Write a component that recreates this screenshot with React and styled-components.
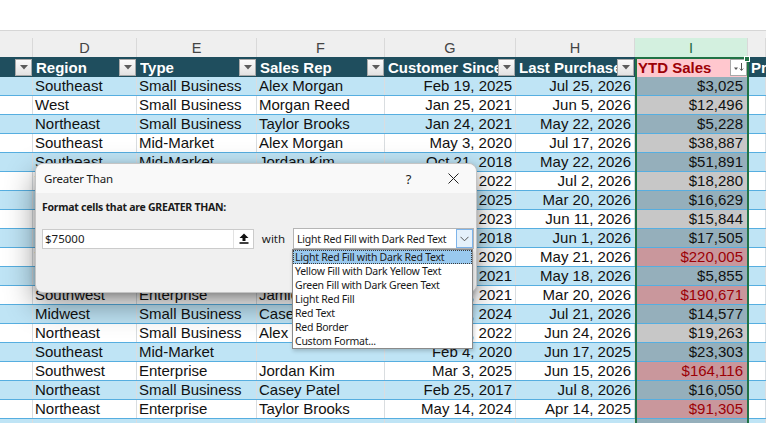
import React from "react";
import styled, { createGlobalStyle } from "styled-components";

const COLS = "33px 104px 120px 128px 131px 119px 113px 1fr";
const GRID_FONT = `"Liberation Sans", Arial, sans-serif`;
const UI_FONT = `"Noto Sans", "Open Sans", sans-serif`;
const LIMIT = 75000;

const letters = ["", "D", "E", "F", "G", "H", "I", ""];
const headers = ["", "Region", "Type", "Sales Rep", "Customer Since", "Last Purchase", "YTD Sales", "Pr"];

const rows = [
  ["Southeast", "Small Business", "Alex Morgan", "Feb 19, 2025", "Jul 25, 2026", "$3,025"],
  ["West", "Small Business", "Morgan Reed", "Jan 25, 2021", "Jun 5, 2026", "$12,496"],
  ["Northeast", "Small Business", "Taylor Brooks", "Jan 24, 2021", "May 22, 2026", "$5,228"],
  ["Southeast", "Mid-Market", "Alex Morgan", "May 3, 2020", "Jul 17, 2026", "$38,887"],
  ["Southeast", "Mid-Market", "Jordan Kim", "Oct 21, 2018", "May 22, 2026", "$51,891"],
  ["West", "Enterprise", "Casey Patel", "Mar 14, 2022", "Jul 2, 2026", "$18,280"],
  ["Midwest", "Small Business", "Morgan Reed", "Sep 9, 2025", "Mar 20, 2026", "$16,629"],
  ["Northeast", "Mid-Market", "Alex Morgan", "Jun 30, 2023", "Jun 11, 2026", "$15,844"],
  ["Southwest", "Small Business", "Taylor Brooks", "Dec 2, 2018", "Jun 1, 2026", "$17,505"],
  ["West", "Enterprise", "Jordan Kim", "Apr 7, 2020", "May 21, 2026", "$220,005"],
  ["Southeast", "Small Business", "Casey Patel", "Nov 18, 2021", "May 18, 2026", "$5,855"],
  ["Southwest", "Enterprise", "Jamie Lee", "Aug 5, 2021", "Mar 20, 2026", "$190,671"],
  ["Midwest", "Small Business", "Casey Patel", "Jan 13, 2024", "Jul 21, 2026", "$14,577"],
  ["Northeast", "Small Business", "Alex Morgan", "Oct 17, 2022", "Jun 24, 2026", "$19,263"],
  ["Southeast", "Mid-Market", "", "Feb 4, 2020", "Jun 17, 2025", "$23,303"],
  ["Southwest", "Enterprise", "Jordan Kim", "Mar 3, 2025", "Jun 15, 2026", "$164,116"],
  ["Northeast", "Small Business", "Casey Patel", "Feb 25, 2017", "Jul 8, 2026", "$16,050"],
  ["Northeast", "Enterprise", "Taylor Brooks", "May 14, 2024", "Apr 14, 2025", "$91,305"],
  ["", "", "", "", "", ""],
];

const formats = [
  "Light Red Fill with Dark Red Text",
  "Yellow Fill with Dark Yellow Text",
  "Green Fill with Dark Green Text",
  "Light Red Fill",
  "Red Text",
  "Red Border",
  "Custom Format...",
];

const toNumber = (s) => Number(s.replace(/[$,]/g, "")) || 0;

function FilterButton({ sorted }) {
  return (
    <FilterBox $sorted={sorted}>
      {sorted ? (
        <svg width="12" height="10" viewBox="0 0 12 10">
          <path d="M1 5.5h4L3 8z" fill="#555" />
          <path d="M8.5 1v7.5M6.8 6.6l1.7 1.7 1.7-1.7" stroke="#555" strokeWidth="1" fill="none" />
        </svg>
      ) : (
        <svg width="8" height="5" viewBox="0 0 8 5">
          <path d="M0 0h8L4 4.5z" fill="#5c5c5c" />
        </svg>
      )}
    </FilterBox>
  );
}

function App() {
  return (
    <Page>
      <GlobalStyle />
      <Ribbon />
      <ColumnStrip>
        <LetterRow>
          {letters.map((l, i) => (
            <Letter key={i} $active={l === "I"}>{l}</Letter>
          ))}
        </LetterRow>
      </ColumnStrip>
      <Table>
        <HeadRow>
          {headers.map((h, i) => (
            <HeadCell key={i} $flag={h === "YTD Sales"}>
              <span>{h}</span>
              {h !== "Pr" && <FilterButton sorted={h === "YTD Sales"} />}
            </HeadCell>
          ))}
        </HeadRow>
        {rows.map((r, i) => {
          const band = i % 2 === 0;
          const hot = toNumber(r[5]) > LIMIT;
          return (
            <Row key={i} $band={band}>
              <Cell />
              <Cell>{r[0]}</Cell>
              <Cell>{r[1]}</Cell>
              <Cell>{r[2]}</Cell>
              <Cell $right>{r[3]}</Cell>
              <Cell $right>{r[4]}</Cell>
              <SalesCell $band={band} $hot={hot}>{r[5]}</SalesCell>
              <Cell />
            </Row>
          );
        })}
        <Selection>
          <Handle />
        </Selection>
      </Table>

      <Dialog>
        <TitleBar>
          <Title>Greater Than</Title>
          <CaptionButton>?</CaptionButton>
          <CaptionButton>
            <svg width="11" height="11" viewBox="0 0 11 11">
              <path d="M0.5 0.5l10 10M10.5 0.5l-10 10" stroke="#222" strokeWidth="1" />
            </svg>
          </CaptionButton>
        </TitleBar>
        <Body>
          <Prompt>Format cells that are GREATER THAN:</Prompt>
          <FieldRow>
            <ValueBox>
              <span>$75000</span>
              <CollapseButton>
                <svg width="10" height="11" viewBox="0 0 10 11">
                  <path d="M5 0.5L9.5 5H6.5v3h-3V5H0.5z" fill="#111" />
                  <rect x="0.5" y="9.2" width="9" height="1.6" fill="#111" />
                </svg>
              </CollapseButton>
            </ValueBox>
            <WithLabel>with</WithLabel>
            <SelectWrap>
              <SelectBox>
                <span>{formats[0]}</span>
                <SelectArrow>
                  <svg width="9" height="6" viewBox="0 0 9 6">
                    <path d="M0.5 0.8l4 4 4-4" stroke="#555" strokeWidth="1" fill="none" />
                  </svg>
                </SelectArrow>
              </SelectBox>
              <OptionList>
                {formats.map((f, i) => (
                  <Option key={f} $current={i === 0}>{f}</Option>
                ))}
              </OptionList>
            </SelectWrap>
          </FieldRow>
        </Body>
      </Dialog>
    </Page>
  );
}

export default App;

const GlobalStyle = createGlobalStyle`
  html, body {
    margin: 0;
    padding: 0;
    background: #ffffff;
    overflow: hidden;
  }
`;

const Page = styled.div`
  position: relative;
  width: 766px;
  height: 423px;
  overflow: hidden;
  background: #ffffff;
  font-family: ${GRID_FONT};
`;

const Ribbon = styled.div`
  height: 30px;
  border-bottom: 1px solid #d6d6d6;
`;

const ColumnStrip = styled.div`
  padding-top: 7px;
  background: #efefef;
`;

const LetterRow = styled.div`
  display: grid;
  grid-template-columns: ${COLS};
  height: 19px;
`;

const Letter = styled.div`
  display: flex;
  align-items: center;
  justify-content: center;
  border-right: 1px solid #d9d9d9;
  font-size: 14.5px;
  color: ${(p) => (p.$active ? "#1c6b3f" : "#444444")};
  background: ${(p) => (p.$active ? "#d3f0df" : "transparent")};
`;

const Table = styled.div`
  position: relative;
`;

const HeadRow = styled.div`
  display: grid;
  grid-template-columns: ${COLS};
  height: 20px;
  background: #1f4e5e;
`;

const HeadCell = styled.div`
  display: flex;
  align-items: center;
  min-width: 0;
  padding-left: 3px;
  background: ${(p) => (p.$flag ? "#ffc7ce" : "transparent")};
  color: ${(p) => (p.$flag ? "#9c0006" : "#ffffff")};
  font-size: 15px;
  font-weight: 700;
  white-space: nowrap;

  span {
    flex: 1;
    overflow: hidden;
  }
`;

const FilterBox = styled.div`
  flex: none;
  width: 15px;
  height: 15px;
  margin-right: 1px;
  display: flex;
  align-items: center;
  justify-content: center;
  border: 1px solid #a9a9a9;
  background: ${(p) => (p.$sorted ? "#ffffff" : "linear-gradient(#fbfbfb, #e2e2e2)")};
`;

const Row = styled.div`
  display: grid;
  grid-template-columns: ${COLS};
  height: 19px;
  box-sizing: border-box;
  border-bottom: 1px solid #56aee0;
  background: ${(p) => (p.$band ? "#bfe4f5" : "#ffffff")};
`;

const Cell = styled.div`
  min-width: 0;
  padding: 0 ${(p) => (p.$right ? "3px" : "2px")} 0 ${(p) => (p.$right ? "0" : "2px")};
  border-right: 1px solid #d9dde0;
  font-size: 15px;
  line-height: 18px;
  color: #111111;
  text-align: ${(p) => (p.$right ? "right" : "left")};
  white-space: nowrap;
  overflow: hidden;
`;

const SalesCell = styled(Cell)`
  text-align: right;
  padding: 0 4px 0 0;
  background: ${(p) => (p.$hot ? "#c9979c" : p.$band ? "#95afbb" : "#c7c7c7")};
  color: ${(p) => (p.$hot ? "#9c0006" : "#111111")};
`;

const Selection = styled.div`
  position: absolute;
  top: 0;
  bottom: 0;
  left: 635px;
  width: 114px;
  box-sizing: border-box;
  border: 2px solid #217346;
  pointer-events: none;
`;

const Handle = styled.div`
  position: absolute;
  top: -3px;
  right: -3px;
  width: 4px;
  height: 4px;
  background: #217346;
  border: 1px solid #ffffff;
`;

const Dialog = styled.div`
  position: absolute;
  left: 35px;
  top: 163px;
  width: 442px;
  height: 130px;
  box-sizing: border-box;
  border: 1px solid #c4c4c4;
  border-radius: 8px;
  background: #f0f0f0;
  box-shadow: 0 12px 30px rgba(0, 0, 0, 0.42), 0 2px 6px rgba(0, 0, 0, 0.2);
  font-family: ${UI_FONT};
  color: #1a1a1a;
`;

const TitleBar = styled.div`
  display: flex;
  align-items: center;
  height: 29px;
  padding-left: 8px;
  border-radius: 8px 8px 0 0;
  background: #f9f9f9;
`;

const Title = styled.div`
  flex: 1;
  font-size: 11.5px;
  letter-spacing: -0.2px;
`;

const CaptionButton = styled.div`
  width: 45px;
  height: 29px;
  display: flex;
  align-items: center;
  justify-content: center;
  font-size: 13px;
  color: #222222;
`;

const Body = styled.div`
  padding: 6px 6px 0 6px;
`;

const Prompt = styled.div`
  height: 16px;
  line-height: 16px;
  font-size: 10.5px;
  font-weight: 700;
  letter-spacing: -0.25px;
`;

const FieldRow = styled.div`
  display: flex;
  align-items: center;
  height: 21px;
  margin-top: 13px;
`;

const ValueBox = styled.div`
  flex: none;
  display: flex;
  align-items: center;
  width: 212px;
  height: 20px;
  box-sizing: border-box;
  border: 1px solid #cbcbcb;
  background: #ffffff;
  font-size: 11.5px;

  span {
    flex: 1;
    padding-left: 2px;
  }
`;

const CollapseButton = styled.div`
  width: 19px;
  height: 18px;
  display: flex;
  align-items: center;
  justify-content: center;
  border-left: 1px solid #e2e2e2;
`;

const WithLabel = styled.div`
  flex: none;
  width: 39px;
  text-align: center;
  font-size: 11.5px;
`;

const SelectWrap = styled.div`
  flex: none;
  position: relative;
`;

const SelectBox = styled.div`
  display: flex;
  align-items: center;
  width: 181px;
  height: 21px;
  box-sizing: border-box;
  border: 1px solid #b5b5b5;
  background: #ffffff;
  font-size: 10.5px;
  letter-spacing: -0.25px;

  span {
    flex: 1;
    padding-left: 3px;
    white-space: nowrap;
  }
`;

const SelectArrow = styled.div`
  width: 17px;
  height: 19px;
  display: flex;
  align-items: center;
  justify-content: center;
  box-sizing: border-box;
  border: 1px solid #7eb4ea;
  background: #e5f1fb;
`;

const OptionList = styled.div`
  position: absolute;
  top: 21px;
  left: -1px;
  width: 181px;
  box-sizing: border-box;
  border: 1px solid #8a8a8a;
  background: #ffffff;
  box-shadow: 1px 2px 4px rgba(0, 0, 0, 0.2);
`;

const Option = styled.div`
  height: 14px;
  line-height: 14px;
  padding-left: 2px;
  box-sizing: border-box;
  font-size: 10.5px;
  letter-spacing: -0.25px;
  white-space: nowrap;
  background: ${(p) => (p.$current ? "#99c9ef" : "transparent")};
  outline: ${(p) => (p.$current ? "1px dotted #3a3a3a" : "none")};
  outline-offset: -1px;
`;
